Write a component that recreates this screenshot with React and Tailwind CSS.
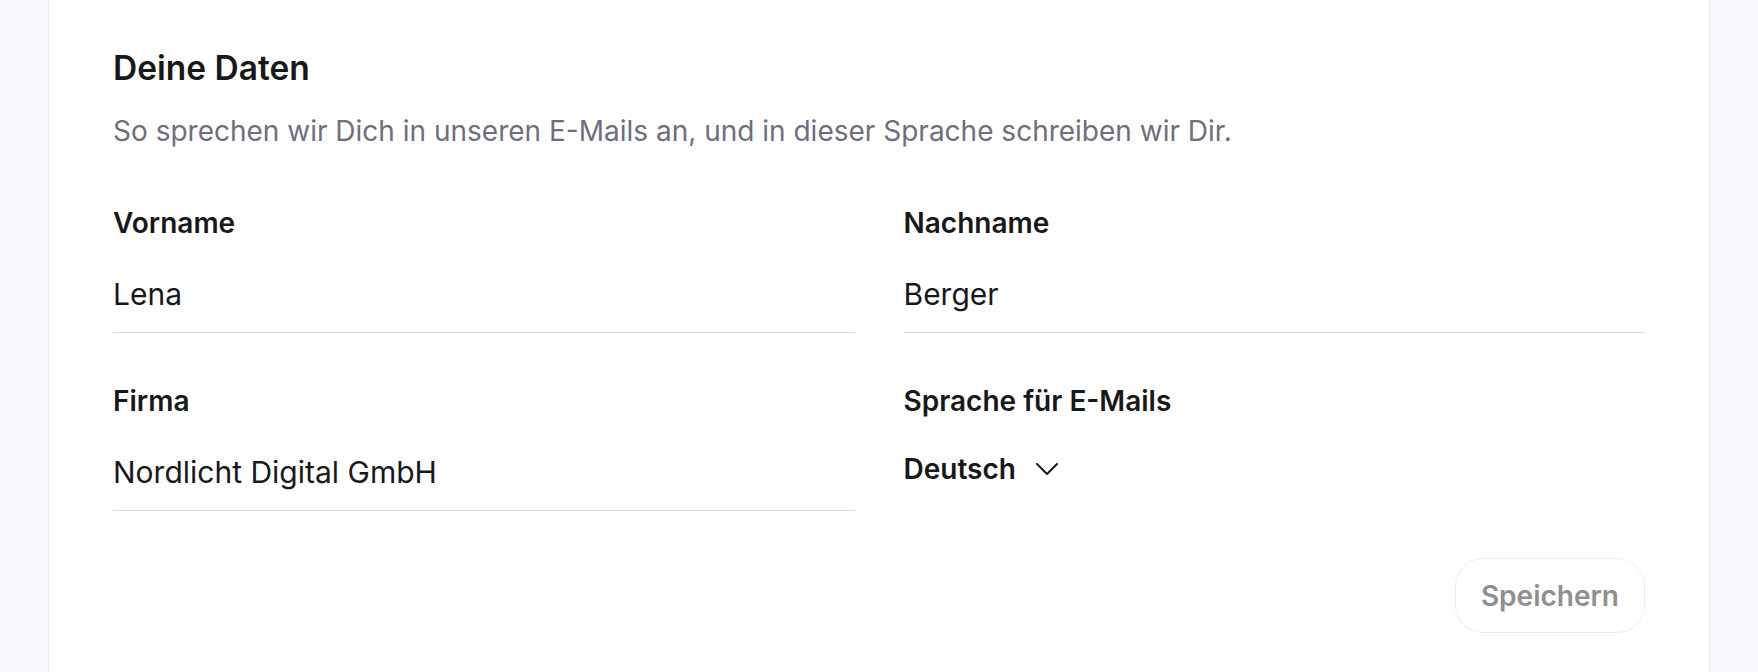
import React from "react";

const FONT = "Inter, 'Noto Sans', sans-serif";

function Field({ label, value }) {
  return (
    <div className="flex flex-col">
      <div className="text-[28px] font-semibold leading-[36px] text-[#18181b]">{label}</div>
      <div className="mt-[33px] border-b border-[#d9d9df] pb-[18px] text-[30px] leading-[40px] text-[#18181b]">{value}</div>
    </div>
  );
}

export default function App() {
  return (
    <div className="flex h-[672px] w-full bg-[#f8f7fe] px-[48px]" style={{ fontFamily: FONT }}>
      <div className="flex-1 border-x border-[#e8e8ef] bg-white px-16 pt-[48px]">
        <h2 className="text-[33.5px] font-semibold leading-[40px] text-[#18181b]">Deine Daten</h2>
        <p className="mt-[25px] text-[28px] leading-[36px] text-[#6e6e7e]">
          So sprechen wir Dich in unseren E-Mails an, und in dieser Sprache schreiben wir Dir.
        </p>
        <div className="mt-[56px] grid grid-cols-2 gap-x-[49px] gap-y-[50px]">
          <Field label="Vorname" value="Lena" />
          <Field label="Nachname" value="Berger" />
          <Field label="Firma" value="Nordlicht Digital GmbH" />
          <div className="flex flex-col">
            <div className="text-[28px] font-semibold leading-[36px] text-[#18181b]">Sprache für E-Mails</div>
            <button className="mt-[32px] flex items-center gap-[20px] self-start text-[28px] font-semibold leading-[36px] text-[#18181b]">
              Deutsch
              <svg width="22" height="12" viewBox="0 0 22 12" fill="none" stroke="#18181b" strokeWidth="2" strokeLinecap="round" strokeLinejoin="round">
                <path d="M1 1l10 10L21 1" />
              </svg>
            </button>
          </div>
        </div>
        <div className="mt-[47px] flex justify-end">
          <button className="h-[75px] rounded-[28px] border border-[#ececec] px-[25px] text-[28px] font-semibold text-[#8f8f8f]">
            Speichern
          </button>
        </div>
      </div>
    </div>
  );
}
